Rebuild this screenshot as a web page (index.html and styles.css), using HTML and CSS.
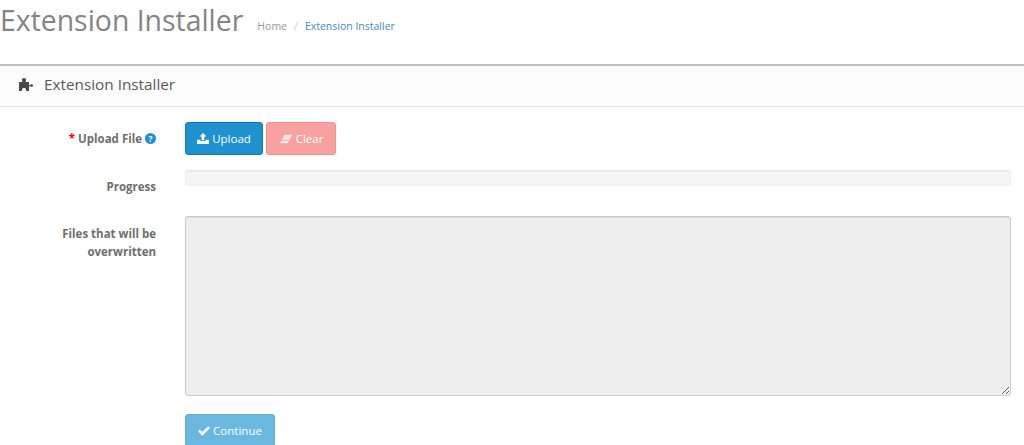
FILE: index.html
```html
<!DOCTYPE html>
<html lang="en">
<head>
    <meta charset="UTF-8">
    <title>Extension Installer</title>
    <link rel="stylesheet" href="styles.css">
</head>
<body>
    <div class="page-header">
        <h1>Extension Installer</h1>
        <ul class="breadcrumb">
            <li><a href="#">Home</a></li>
            <li class="sep">/</li>
            <li><a class="current" href="#">Extension Installer</a></li>
        </ul>
    </div>

    <div class="panel">
        <div class="panel-heading">
            <svg class="icon-puzzle" viewBox="0 0 16 14" width="16" height="14">
                <path d="M1 14V5h3.2c.3 0 .4-.3.2-.6C4 3.900 3.900 3.400 3.900 2.900 3.900 1.700 4.900 1 6 1s2.100.7 2.100 1.900c0 .5-.1 1-.5 1.500-.2.3-.1.6.2.6H11v3h1c.3 0 .5-.2.8-.4.3-.2.600-.3 1-.3.7 0 1.200.7 1.200 1.300s-.5 1.300-1.200 1.300c-.4 0-.7-.1-1-.3-.3-.2-.5-.4-.8-.4h-1V14H8v-1.500c0-.8-.9-1.500-2-1.500s-2 .7-2 1.500V14z"/>
            </svg>
            <h3>Extension Installer</h3>
        </div>
        <form class="panel-body">
            <div class="form-group">
                <label class="control-label required">
                    <span class="star">*</span> Upload File
                    <svg class="icon-help" viewBox="0 0 12 12" width="11" height="11">
                        <circle cx="6" cy="6" r="6" fill="#1e91cf"/>
                        <text x="6" y="9.400" text-anchor="middle" class="help-mark">?</text>
                    </svg>
                </label>
                <div class="buttons">
                    <button type="button" class="btn btn-primary">
                        <svg viewBox="0 0 14 13" width="12" height="11">
                            <path d="M7 0l4 4.200H8.500V8.500h-3V4.200H3zM0 8h4v1.500h6V8h4v5H0z"/>
                        </svg>
                        Upload
                    </button>
                    <button type="button" class="btn btn-danger">
                        <svg viewBox="0 0 15 12" width="14" height="10">
                            <path d="M5.500 1H15l-3.300 6H2.700zM2.200 8h9l-1.700 3H0z"/>
                        </svg>
                        Clear
                    </button>
                </div>
            </div>
            <div class="form-group progress-group">
                <label class="control-label">Progress</label>
                <div class="progress"></div>
            </div>
            <div class="form-group overwrite-group">
                <label class="control-label">Files that will be overwritten</label>
                <textarea class="form-control" readonly></textarea>
            </div>
            <div class="form-group continue-group">
                <span></span>
                <div class="buttons">
                    <button type="button" class="btn btn-continue">
                        <svg viewBox="0 0 14 11" width="12" height="10">
                            <path d="M0 5.800l2-2 3 3L12 0l2 2-9 9z"/>
                        </svg>
                        Continue
                    </button>
                </div>
            </div>
        </form>
    </div>
</body>
</html>
```

FILE: styles.css
```css
html, body {
    margin: 0;
    height: 100%;
    overflow: hidden;
}
body {
    font-family: "Open Sans", sans-serif;
    font-size: 12px;
    color: #666;
    background: #fff;
}
.page-header {
    display: flex;
    align-items: flex-start;
    height: 64px;
}
h1 {
    margin: 0;
    font-size: 28.400px;
    font-weight: 400;
    line-height: 40px;
    color: #848484;
}
.breadcrumb {
    display: flex;
    gap: 7px;
    list-style: none;
    margin: 0;
    padding: 18px 0 0 14px;
    font-size: 10.500px;
    line-height: 16px;
}
.breadcrumb a {
    color: #999;
    text-decoration: none;
}
.breadcrumb a.current {
    color: #4e85c4;
}
.sep {
    color: #ccc;
}
.panel {
    border-top: 2px solid #bfbfbf;
}
.panel-heading {
    display: flex;
    align-items: center;
    box-sizing: border-box;
    height: 41px;
    padding: 0 0 5px 18px;
    background: #fcfcfc;
    border-bottom: 1px solid #e8e8e8;
}
.icon-puzzle {
    fill: #4f4a4a;
}
h3 {
    margin: 0 0 0 10px;
    font-size: 15.300px;
    font-weight: 400;
    color: #595959;
}
.panel-body {
    padding: 15px 13px 0 0;
}
.form-group {
    display: grid;
    grid-template-columns: 156px 1fr;
    column-gap: 29px;
}
.control-label {
    padding-top: 8px;
    font-size: 11.500px;
    font-weight: 700;
    line-height: 18px;
    text-align: right;
    color: #6e6e6e;
}
.star {
    color: #f00;
}
.icon-help {
    vertical-align: -1px;
}
.help-mark {
    font-size: 9px;
    font-weight: 700;
    fill: #fff;
}
.buttons {
    display: flex;
    gap: 3px;
}
.btn {
    display: flex;
    align-items: center;
    justify-content: center;
    gap: 3px;
    height: 33px;
    padding: 0;
    border: 1px solid;
    border-radius: 3px;
    font-family: inherit;
    font-size: 11.500px;
    color: #fff;
    cursor: pointer;
}
.btn svg {
    fill: #fff;
}
.btn-primary {
    width: 78px;
    background: #1e91cf;
    border-color: #1978ab;
}
.btn-danger {
    width: 70px;
    background: #f9a0a0;
    border-color: #f38f8f;
}
.btn-danger svg {
    opacity: .75;
}
.btn-continue {
    width: 90px;
    background: #6ab8e0;
    border-color: #62b0d9;
}
.progress-group {
    margin-top: 15px;
}
.progress-group .control-label {
    padding-top: 0;
    margin-top: 8px;
}
.progress {
    height: 16px;
    background: #f5f5f5;
    border: 0;
    border-radius: 3px;
    box-shadow: inset 0 1px 2px rgba(0, 0, 0, .08);
}
.overwrite-group {
    margin-top: 20px;
}
.overwrite-group .control-label {
    padding-top: 9px;
}
.form-control {
    display: block;
    box-sizing: border-box;
    width: 100%;
    height: 180px;
    padding: 8px 13px;
    background: #eee;
    border: 1px solid #ccc;
    border-radius: 3px;
    box-shadow: inset 0 1px 1px rgba(0, 0, 0, .075);
}
.continue-group {
    margin-top: 18px;
}
```
